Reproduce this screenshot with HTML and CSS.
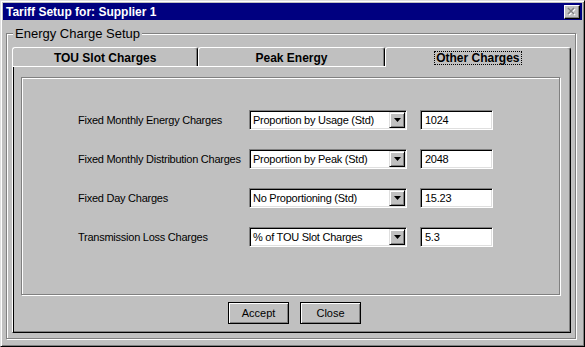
FILE: index.html
```html
<!DOCTYPE html>
<html lang="en">
<head>
  <meta charset="UTF-8">
  <title>Tariff Setup for: Supplier 1</title>
  <link rel="stylesheet" href="styles.css">
</head>
<body>
  <div class="window">
    <div class="titlebar">
      <span class="title">Tariff Setup for: Supplier 1</span>
      <span class="close-btn">
        <svg width="10" height="9" viewBox="0 0 10 9">
          <path d="M2 2 L8 8 M8 2 L2 8" stroke="#fff" stroke-width="1.6" fill="none"/>
          <path d="M1 1 L7 7 M7 1 L1 7" stroke="#808080" stroke-width="1.6" fill="none"/>
        </svg>
      </span>
    </div>

    <div class="groupbox">
      <span class="group-caption">Energy Charge Setup</span>

      <div class="tabs">
        <div class="tab">TOU Slot Charges</div>
        <div class="tab">Peak Energy</div>
        <div class="tab active"><span class="focus">Other Charges</span></div>
      </div>

      <div class="tab-panel">
        <div class="frame">
          <div class="rows">
            <span class="label">Fixed Monthly Energy Charges</span>
            <div class="combo"><span class="combo-text">Proportion by Usage (Std)</span><span class="drop-btn"><svg width="7" height="4" viewBox="0 0 7 4"><path d="M0 0 H7 L3.5 4 Z" fill="#000"/></svg></span></div>
            <input class="field" type="text" value="1024">

            <span class="label">Fixed Monthly Distribution Charges</span>
            <div class="combo"><span class="combo-text">Proportion by Peak (Std)</span><span class="drop-btn"><svg width="7" height="4" viewBox="0 0 7 4"><path d="M0 0 H7 L3.5 4 Z" fill="#000"/></svg></span></div>
            <input class="field" type="text" value="2048">

            <span class="label">Fixed Day Charges</span>
            <div class="combo"><span class="combo-text">No Proportioning (Std)</span><span class="drop-btn"><svg width="7" height="4" viewBox="0 0 7 4"><path d="M0 0 H7 L3.5 4 Z" fill="#000"/></svg></span></div>
            <input class="field" type="text" value="15.23">

            <span class="label">Transmission Loss Charges</span>
            <div class="combo"><span class="combo-text">% of TOU Slot Charges</span><span class="drop-btn"><svg width="7" height="4" viewBox="0 0 7 4"><path d="M0 0 H7 L3.5 4 Z" fill="#000"/></svg></span></div>
            <input class="field" type="text" value="5.3">
          </div>
        </div>

        <div class="buttons">
          <button class="btn">Accept</button>
          <button class="btn">Close</button>
        </div>
      </div>
    </div>
  </div>
</body>
</html>
```

FILE: styles.css
```css
body, html {
  margin: 0;
  padding: 0;
  background: #c0c0c0;
  font-family: 'Liberation Sans', Arial, sans-serif;
}
.window {
  width: 585px;
  height: 347px;
  box-sizing: border-box;
  padding: 2px;
  background: #c0c0c0;
  border: 1px solid;
  border-color: #dfdfdf #000 #000 #dfdfdf;
  box-shadow: inset 1px 1px #fff, inset -1px -1px #808080;
  display: flex;
  flex-direction: column;
}
.titlebar {
  height: 17px;
  flex: none;
  background: #000080;
  display: flex;
  align-items: center;
  justify-content: space-between;
  padding: 0 2px 0 3px;
}
.title {
  color: #fff;
  font-weight: bold;
  font-size: 12px;
}
.close-btn {
  width: 16px;
  height: 14px;
  box-sizing: border-box;
  background: #c0c0c0;
  border: 1px solid;
  border-color: #fff #000 #000 #fff;
  box-shadow: inset -1px -1px #808080;
  display: flex;
  align-items: center;
  justify-content: center;
}
.groupbox {
  position: relative;
  flex: 1;
  margin: 13px 6px 5px 3px;
  border: 1px solid #808080;
  box-shadow: inset 1px 1px #fff, 1px 1px #fff;
  padding: 13px 4px 5px 5px;
  display: flex;
  flex-direction: column;
}
.group-caption {
  position: absolute;
  top: -8px;
  left: 6px;
  padding: 0 2px;
  background: #c0c0c0;
  font-size: 13px;
  line-height: 15px;
  color: #000;
}
.tabs {
  display: flex;
  height: 19px;
  flex: none;
}
.tab {
  flex: 1;
  box-sizing: border-box;
  height: 19px;
  border: 1px solid;
  border-bottom: none;
  border-color: #fff #000 #000 #fff;
  border-radius: 3px 3px 0 0;
  box-shadow: inset -1px 0 #808080;
  font-weight: bold;
  font-size: 12px;
  display: flex;
  align-items: center;
  justify-content: center;
  padding-top: 1px;
}
.tab.active {
  position: relative;
  height: 20px;
  margin-bottom: -1px;
  background: #c0c0c0;
  z-index: 1;
}
.focus {
  border: 1px dotted #000;
  padding: 0 1px;
  line-height: 12px;
}
.tab-panel {
  flex: 1;
  border: 1px solid;
  border-color: #fff #000 #000 #fff;
  box-shadow: inset 1px 0 #000, inset -1px -1px #808080;
  display: flex;
  flex-direction: column;
}
.frame {
  height: 218px;
  box-sizing: border-box;
  margin: 10px 10px 0 8px;
  border: 1px solid #808080;
  box-shadow: inset 1px 1px #fff, 1px 1px #fff;
  padding: 32px 0 0 56px;
}
.rows {
  display: grid;
  grid-template-columns: 158px 158px 73px;
  grid-auto-rows: 20px;
  column-gap: 13px;
  row-gap: 19px;
  align-items: center;
}
.label, .combo-text, .field, .btn {
  font-family: 'Liberation Sans', Arial, sans-serif;
  font-size: 11px;
  letter-spacing: -0.25px;
  color: #000;
  white-space: nowrap;
}
.combo, .field {
  height: 20px;
  box-sizing: border-box;
  background: #fff;
  border: 1px solid;
  border-color: #808080 #fff #fff #808080;
  box-shadow: inset 1px 1px #000, inset -1px -1px #dfdfdf;
}
.combo {
  display: flex;
  align-items: center;
  justify-content: space-between;
  padding: 1px 1px 1px 3px;
}
.drop-btn {
  width: 16px;
  height: 16px;
  box-sizing: border-box;
  background: #c0c0c0;
  border: 1px solid;
  border-color: #dfdfdf #000 #000 #dfdfdf;
  box-shadow: inset 1px 1px #fff, inset -1px -1px #808080;
  display: flex;
  align-items: center;
  justify-content: center;
}
.field {
  width: 73px;
  padding: 0 4px;
  outline: none;
  margin: 0;
}
.buttons {
  display: flex;
  justify-content: center;
  gap: 11px;
  margin-top: 7px;
  padding-left: 6px;
}
.btn {
  width: 61px;
  height: 22px;
  box-sizing: border-box;
  background: #c0c0c0;
  border: 1px solid #000;
  box-shadow: inset 1px 1px #fff, inset -1px -1px #808080;
  padding: 0;
  letter-spacing: 0;
}
```
